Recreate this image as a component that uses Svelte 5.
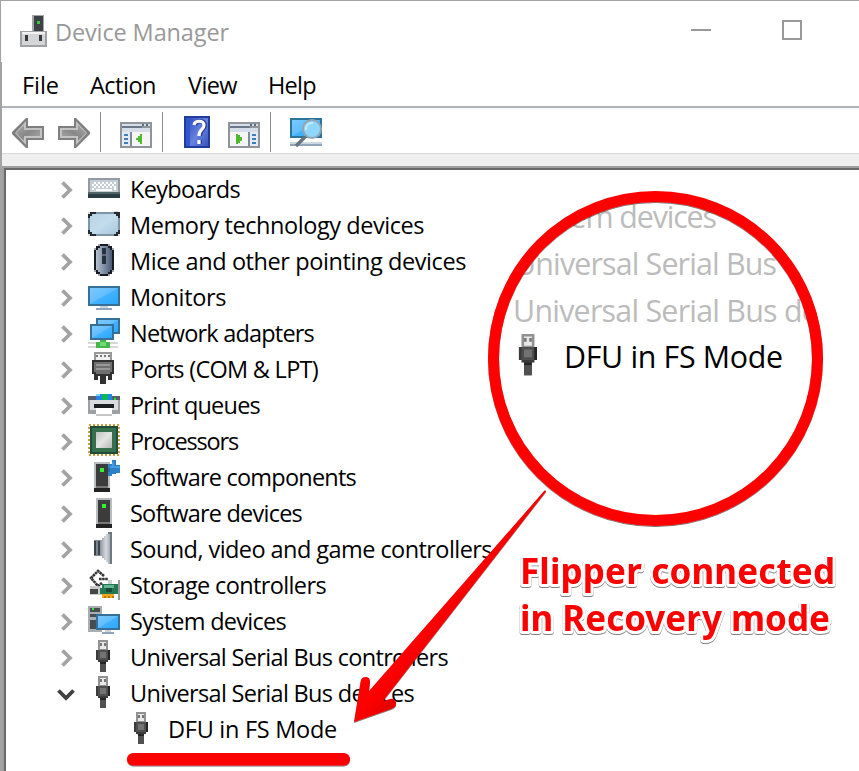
<script>
  const rows = [
    { label: 'Keyboards', icon: 'keyboard', width: 110 },
    { label: 'Memory technology devices', icon: 'memory', width: 294 },
    { label: 'Mice and other pointing devices', icon: 'mouse', width: 336 },
    { label: 'Monitors', icon: 'monitor', width: 96 },
    { label: 'Network adapters', icon: 'network', width: 184 },
    { label: 'Ports (COM & LPT)', icon: 'port', width: 188 },
    { label: 'Print queues', icon: 'printer', width: 130 },
    { label: 'Processors', icon: 'cpu', width: 108 },
    { label: 'Software components', icon: 'component', width: 226 },
    { label: 'Software devices', icon: 'software', width: 172 },
    { label: 'Sound, video and game controllers', icon: 'sound', width: 362 },
    { label: 'Storage controllers', icon: 'storage', width: 196 },
    { label: 'System devices', icon: 'system', width: 156 },
    { label: 'Universal Serial Bus controllers', icon: 'usb', width: 318 },
    { label: 'Universal Serial Bus devices', icon: 'usb', width: 284, open: true },
    { label: 'DFU in FS Mode', icon: 'usb', width: 169, child: true }
  ];

  const menus = [
    { label: 'File', width: 37 },
    { label: 'Action', width: 66 },
    { label: 'View', width: 49 },
    { label: 'Help', width: 48 }
  ];

  const tower = (x, y) =>
    `<path fill="#b9bdc0" d="M${x} ${y}h16v26h-16z"/><path fill="#3c3c3c" d="M${x + 2} ${y + 2}h12v22h-12z"/><path fill="#33f233" d="M${x + 6} ${y + 6}h4v4h-4z"/><path fill="#777" d="M${x + 2} ${y + 24}h12v2h-12z"/><path fill="#222" d="M${x} ${y + 26}h16v4h-16z"/>`;

  const keys = [
    [6, 10], [10, 10], [14, 10], [18, 10], [22, 10], [26, 10],
    [4, 12], [8, 12], [12, 12], [16, 12], [20, 12], [24, 12],
    [6, 14], [10, 14], [14, 14], [18, 14], [22, 14], [26, 14],
    [4, 16], [26, 16]
  ].map(([x, y]) => `<path fill="#fff" d="M${x} ${y}h2v2h-2z"/>`).join('');

  const panel = (inner) =>
    `<path fill="#8f949b" d="M0 6h32v26H0z"/><path fill="#d5dde8" d="M2 8h28v2H2zM2 12h28v4H2z"/><path fill="#6a7788" d="M2 10h20v2H2z"/><path fill="#596a82" d="M22 8h2v2h-2zM26 8h2v2h-2z"/><path fill="#f5f5f5" d="M2 16h28v14H2z"/>${inner}`;

  const icons = {
    keyboard: `<path fill="#929ba5" d="M0 6h32v14H0z"/><path fill="#c5ccd4" d="M2 8h28v12H2z"/>${keys}<path fill="#fff" d="M8 17h16v2H8z"/><path fill="#53646b" d="M0 20h32v2H0z"/><path fill="#2c3d43" d="M0 22h32v4H0z"/>`,
    memory: `<path fill="#7e95a6" d="M0 4h32v24H0z"/><path fill="url(#pale)" d="M4 6h24v2h2v16h-2v2H4v-2H2V8h2z"/><path fill="#262a2e" d="M0 4h8v2H4v2H2v2H0zM26 4h6v6h-2V8h-2V6h-2zM0 22h2v2h2v2h4v2H0zM32 22v6h-6v-2h2v-2h2v-2z"/><path fill="#d7dcdf" d="M0 4h2v2H0zM0 26h2v2H0zM30 26h2v2h-2zM26 3h4v1h-4z"/>`,
    mouse: `<path fill="#aaa" d="M10 0h12v2h2v2h2v24h-2v2h-2v2H10v-2H8v-2H6V4h2V2h2z"/><path fill="#171c24" d="M12 0h8v2h4v4h2v20h-2v4h-4v2h-8v-2H8v-4H6V6h2V2h4z"/><path fill="url(#mouse)" d="M12 2h8v2h2v2h2v20h-2v2h-2v2h-8v-2h-2v-2H8V6h2V4h2z"/><path fill="#28313e" d="M14 4h4v16h-4z"/><path fill="#626b78" d="M14 10h4v2h-4z"/>`,
    monitor: `<path fill="#376f99" d="M0 6h32v20H0z"/><path fill="url(#screen)" d="M2 8h28v16H2z"/><path fill="#cbd5df" d="M12 26h8v2h-8z"/><path fill="#91a6ba" d="M8 28h16v2H8z"/>`,
    network: `<path fill="#376f99" d="M8 2h24v16H8z"/><path fill="url(#screen)" d="M10 4h20v12H10z"/><path fill="#376f99" d="M2 8h24v16H2z"/><path fill="url(#screen)" d="M4 10h20v12H4z"/><path fill="#d7d9d9" d="M0 26h30v6H0z"/><path fill="#fff" d="M0 28h30v2H0z"/><path fill="#45b64c" d="M8 26h4v-2h6v2h4v6H8z"/><path fill="#6fdb75" d="M12 26h6v4h-6z"/>`,
    port: `<path fill="#999" d="M6 0h18v10H6z"/><path fill="#f0f0f0" d="M8 2h14v8H8z"/><path fill="#777" d="M8 3h2v2H8zM12 3h2v2h-2zM16 3h2v2h-2zM20 3h2v2h-2z"/><path fill="#323232" d="M4 8h22v14h-2v6h-4v-4h-2v8h-6v-8h-2v4H6v-6H4z"/><path fill="#6f6f6f" d="M6 10h18v10h-2v2H8v-2H6z"/><path fill="#999" d="M8 12h14v2H8zM8 16h14v2H8z"/>`,
    printer: `<path fill="#566068" d="M0 8h8v6H0zM24 8h8v6h-8z"/><path fill="#2584e7" d="M8 6h16v8H8z"/><path fill="#8ccdff" d="M8 6h4v2H8z"/><path fill="#08b957" d="M14 6h6v6h-6z"/><path fill="#9aa0a5" d="M0 12h32v14H0z"/><path fill="#d9dcde" d="M2 12h28v10H2z"/><path fill="#20e52d" d="M26 10h2v2h-2z"/><path fill="#1b1f22" d="M6 16h20v4H6z"/><path fill="#fff" d="M8 20h16v8H8z"/><path fill="#c5c5c5" d="M8 26h16v2H8z"/>`,
    cpu: `<rect x="1" y="1" width="30" height="30" fill="none" stroke="#c99c48" stroke-width="2" stroke-dasharray="2 2"/><path fill="#224c37" d="M2 2h28v28H2z"/><path fill="#37704f" d="M4 4h24v24H4z"/><path fill="#285b41" d="M8 8h16v16H8z"/><path fill="url(#metal)" d="M8 8h16v16H8z"/>`,
    component: tower(6, 2) + `<path fill="#2d7fc6" d="M24 0h4v4h4v12h-4v-2h-4v2h-4V4h4z"/><path fill="#fff" d="M28 2h4v3h-4zM28 13h4v3h-4z"/><path fill="#2268ac" d="M20 8h2v4h-2z"/><path fill="#439de2" d="M24 2h2v4h6v2H22V6h2z"/>`,
    software: tower(8, 2),
    sound: `<path fill="#7d8790" d="M6 8h6v16H6z"/><path fill="#3b444c" d="M6 9h2v14H6zM10 9h2v14h-2z"/><path fill="url(#cone)" d="M12 8h2V6h2V4h2V2h2V0h4v32h-4v-2h-2v-2h-2v-2h-2v-2h-2z"/><path fill="#6d7880" d="M20 0h4v32h-2V2h-2z"/>`,
    storage: `<path fill="none" stroke="#353535" stroke-width="2.6" stroke-dasharray="2.6 .5" d="M16 8 10 3 3 10l7 8 4-3M11 11h9"/><path fill="#c7c9ca" d="M2 18h8l6 3v6H2z"/><path fill="#454545" d="M2 21h8v5H2z"/><path fill="#c8d1d2" d="M20 12h4v4h-4z"/><path fill="#267653" d="M14 16h16v10H12v-6h2z"/><path fill="#64b693" d="M16 17h10v3H16z"/><path fill="#174a39" d="M18 20h6v4h-6z"/><path fill="#efa81d" d="M14 26h12v4H14z"/><path fill="#b57613" d="M16 28h2v2h-2zM20 28h2v2h-2zM24 28h2v2h-2z"/><path fill="#969b9d" d="M30 12h2v20h-2z"/>`,
    system: `<path fill="#a8aeb2" d="M0 2h14v26H0z"/><path fill="#484d50" d="M2 4h10v4H2zM2 10h10v3H2zM2 16h7v9H2z"/><path fill="#3de544" d="M4 4h2v2H4z"/><path fill="#376f99" d="M8 10h24v16H8z"/><path fill="url(#screen)" d="M10 12h20v12H10z"/><path fill="#cbd5df" d="M17 26h6v2h-6z"/><path fill="#91a6ba" d="M14 28h12v2H14z"/>`,
    usb: `<path fill="#929292" d="M10 0h10v10H10z"/><path fill="#e8e8e8" d="M12 2h6v7h-6z"/><path fill="#777" d="M12 3h2v3h-2zM16 3h2v3h-2z"/><path fill="#3b3b3b" d="M8 10h14v10h-2v2h-2v10h-6V22h-2v-2H8z"/><path fill="#4f4f4f" d="M10 10h10v10H10z"/><path fill="#737373" d="M12 12h6v6h-6z"/><path fill="#242424" d="M20 10h2v10h-2zM12 22h6v2h-6z"/><path fill="#505050" d="M12 24h6v8h-6z"/>`,
    back: `<path fill="#7f7f7f" d="M14 2h2v8h16v14H16v8h-2l-2-2-2-2-2-2-2-2-2-2-2-2-2-2v-2l2-2 2-2 2-2 2-2 2-2 2-2z"/><path fill="#c3c3c3" d="M14 5v7h16v10H14v7L3 17z"/><path fill="url(#arrow)" d="M12 9v5h16v6H12v5l-8-8z"/>`,
    forward: `<g transform="matrix(-1 0 0 1 32 0)"><path fill="#7f7f7f" d="M14 2h2v8h16v14H16v8h-2l-2-2-2-2-2-2-2-2-2-2-2-2-2-2v-2l2-2 2-2 2-2 2-2 2-2 2-2z"/><path fill="#c3c3c3" d="M14 5v7h16v10H14v7L3 17z"/><path fill="url(#arrow)" d="M12 9v5h16v6H12v5l-8-8z"/></g>`,
    left: panel(`<path fill="#e4eaf1" d="M2 16h8v14H2z"/><path fill="#3c7fbd" d="M4 18h4v2H4zM4 22h4v2H4zM4 26h4v2H4z"/><path fill="#7d8a9b" d="M10 16h2v14h-2z"/><path fill="#4fba2d" d="M22 18v10h-2v-2h-2v-2h-2v-2h2v-2h2v-2z"/>`),
    right: panel(`<path fill="#e4eaf1" d="M22 16h8v14h-8z"/><path fill="#3c7fbd" d="M24 18h4v2h-4zM24 22h4v2h-4zM24 26h4v2h-4z"/><path fill="#7d8a9b" d="M20 16h2v14h-2z"/><path fill="#4fba2d" d="M8 18v10h2v-1h2v-2h2v-4h-2v-2h-2v-1z"/>`),
    help: `<path fill="#233b9c" d="M2 0h26v32H2z"/><path fill="url(#book)" d="M8 2h18v28H8z"/><path fill="#3157cf" d="M4 2h4v28H4z"/><path fill="none" stroke="#263c8c" stroke-width="4" d="M13 9c1-5 10-5 10 0 0 5-5 4-5 11m0 4v4"/><path fill="none" stroke="#fff" stroke-width="3.2" d="M12 9c1-5 10-5 10 0 0 5-5 4-5 11m0 4v4"/>`,
    scan: `<path fill="#2c7499" d="M0 2h32v20H0z"/><path fill="url(#screen)" d="M2 4h28v16H2z"/><path fill="#ccd7df" d="M0 26h32v2H0z"/><path fill="#91a6ba" d="M0 28h32v2H0z"/><path fill="none" stroke="#65747d" stroke-width="3.400" d="m15 21-9 9"/><circle cx="22" cy="13" r="9" fill="#8fd6fc" stroke="#91a5b1" stroke-width="2"/><path fill="none" stroke="#c3eaff" stroke-width="2" d="M16 14a6 6 0 0 1 7-7"/>`,
    app: `<path fill="#a3a7aa" d="M12 0h12v16H12z"/><path fill="#3c4144" d="M14 1h9v16h-9z"/><path fill="#35c847" d="M17 6h3v3h-3z"/><path fill="#9fa2a5" d="M0 16h27v16H0z"/><path fill="#d3d5d7" d="M2 17h23v13H2z"/><path fill="#f2f2f2" d="M2 17h23v2H2z"/><path fill="#343b40" d="M5 20h3v6H5zM19 20h3v6h-3z"/>`
  };

  // Spreads a label over its measured width with even tracking.
  function fit(node, width) {
    const natural = node.getBoundingClientRect().width;
    node.style.letterSpacing = `${(width - natural) / node.textContent.length}px`;
  }
</script>

{#snippet icon(name)}
  <svg class="icon" viewBox="0 0 32 32" aria-hidden="true">{@html icons[name]}</svg>
{/snippet}

<svg class="defs" aria-hidden="true">
  <defs>
    <linearGradient id="screen" x2="1" y2="1"><stop offset="0" stop-color="#7bc9ff" /><stop offset=".48" stop-color="#63beff" /><stop offset=".52" stop-color="#43b2ff" /><stop offset="1" stop-color="#29a7fb" /></linearGradient>
    <linearGradient id="pale" x2="1" y2="1"><stop offset="0" stop-color="#bad4e5" /><stop offset=".5" stop-color="#c3dcec" /><stop offset="1" stop-color="#a9c7dc" /></linearGradient>
    <linearGradient id="mouse" x2="1"><stop offset="0" stop-color="#b6c0ce" /><stop offset=".5" stop-color="#8090a7" /><stop offset="1" stop-color="#4a5a73" /></linearGradient>
    <linearGradient id="metal" x2="1" y2="1"><stop offset="0" stop-color="#bfc2c2" /><stop offset=".5" stop-color="#e5e5e5" /><stop offset="1" stop-color="#b5b7b7" /></linearGradient>
    <linearGradient id="cone" x2="1"><stop offset="0" stop-color="#8c959d" /><stop offset=".5" stop-color="#d6dade" /><stop offset="1" stop-color="#8c959d" /></linearGradient>
    <linearGradient id="arrow" x2="1" y2="1"><stop offset="0" stop-color="#aaa" /><stop offset=".5" stop-color="#888" /><stop offset="1" stop-color="#aaa" /></linearGradient>
    <linearGradient id="book" x2="1" y2="1"><stop offset="0" stop-color="#3552c5" /><stop offset=".5" stop-color="#6683df" /><stop offset="1" stop-color="#3854bd" /></linearGradient>
  </defs>
</svg>

<main class="window">
  <header class="titlebar">
    {@render icon('app')}
    <h1><span use:fit={174}>Device Manager</span></h1>
    <div class="controls"><i class="min"></i><i class="max"></i></div>
  </header>

  <div class="body">
    <nav class="menu">
      {#each menus as m}<span class="item"><span use:fit={m.width}>{m.label}</span></span>{/each}
    </nav>
    <div class="toolbar">
      {@render icon('back')}
      <span class="gap"></span>
      {@render icon('forward')}
      <i class="sep"></i>
      {@render icon('left')}
      <i class="sep"></i>
      {@render icon('help')}
      <span class="gap"></span>
      {@render icon('right')}
      <i class="sep"></i>
      {@render icon('scan')}
    </div>
    <div class="strip"></div>
    <ul class="tree">
      {#each rows as r}
        <li class:child={r.child}>
          <svg class="chevron" viewBox="0 0 18 36" aria-hidden="true">
            {#if r.open}
              <path d="M.5 14.500 8 22l7.500-7.500" stroke="#404040" />
            {:else if !r.child}
              <path d="m4.500 10.500 7.500 7.500-7.500 7.500" stroke="#a3a3a3" />
            {/if}
          </svg>
          {@render icon(r.icon)}
          <span class="label" use:fit={r.width}>{r.label}</span>
        </li>
      {/each}
    </ul>
  </div>

  <svg class="notes" viewBox="0 0 859 771">
    <defs>
      <clipPath id="lens"><circle cx="655.5" cy="358.500" r="160" /></clipPath>
      <linearGradient id="shaft" gradientUnits="userSpaceOnUse" x1="405" y1="648" x2="424" y2="663"><stop offset="0" stop-color="#ff0000" /><stop offset=".4" stop-color="#fa0202" /><stop offset="1" stop-color="#e60000" /></linearGradient>
      <filter id="edge" x="-5%" y="-5%" width="110%" height="112%"><feDropShadow dx="0" dy="1" stdDeviation=".5" flood-color="#000" flood-opacity=".55" /></filter>
    </defs>
    <g clip-path="url(#lens)">
      <circle cx="655.5" cy="358.500" r="160" fill="#fff" />
      <g class="faded">
        <text x="517" y="228" textLength="200">System devices</text>
        <text x="514" y="274.500" textLength="413">Universal Serial Bus controllers</text>
        <text x="513" y="321.500" textLength="371">Universal Serial Bus devices</text>
      </g>
      <text x="564" y="368" textLength="219">DFU in FS Mode</text>
      <svg x="508.500" y="334" width="41.500" height="41.500" viewBox="0 0 32 32">{@html icons.usb}</svg>
    </g>
    <g filter="url(#edge)">
      <circle cx="655.5" cy="358.500" r="162" fill="none" stroke="#f00" stroke-width="11" />
    </g>
    <path filter="url(#edge)" fill="url(#shaft)" d="M544.500 490.500 Q546 490 546 491.500L383 701l7-2q5-1 6 3.500t-5 6.500L354 722l6.500-40q.7-5 5.200-5t4.300 5L369 691z" />
    <rect filter="url(#edge)" x="127" y="753" width="223" height="12.500" rx="6.200" fill="#f00" />
    <g class="caption">
      <text x="520" y="583.500" textLength="315">Flipper connected</text>
      <text x="520" y="630.500" textLength="310">in Recovery mode</text>
    </g>
  </svg>
</main>

<style>
  :global(body) { margin: 0; overflow: hidden; }
  .defs { position: absolute; width: 0; height: 0; }
  .window {
    position: relative;
    box-sizing: border-box;
    width: 859px;
    height: 771px;
    overflow: hidden;
    background: #fff;
    border-top: 1px solid #a3a3a3;
    font: 23.5px/34px "Open Sans", "Noto Sans", sans-serif;
    color: #000;
    white-space: nowrap;
  }
  .icon { display: block; flex: none; width: 32px; height: 32px; overflow: visible; }
  .titlebar {
    display: flex;
    align-items: flex-start;
    box-sizing: border-box;
    height: 61px;
    padding: 14px 57px 0 19px;
    border-left: 1px solid #a3a3a3;
  }
  h1 { margin: 0 0 0 3px; font: inherit; color: #999; }
  .controls { display: flex; align-items: center; gap: 71px; margin: 5px 0 0 auto; height: 20px; }
  .min { width: 20px; height: 2px; background: #999; }
  .max { box-sizing: border-box; width: 20px; height: 20px; border: 2px solid #999; }
  .body { border-left: 2px solid #a3a3a3; }
  .menu { display: flex; box-sizing: border-box; height: 46px; padding: 6px 0 0 20px; border-bottom: 2px solid #b2b2b2; }
  .item:nth-child(1) { width: 68px; }
  .item:nth-child(2) { width: 98px; }
  .item:nth-child(3) { width: 80px; }
  .toolbar {
    display: flex;
    box-sizing: border-box;
    height: 46px;
    padding: 8px 0 0 10px;
    border-bottom: 1px solid #d9d9d9;
    box-shadow: inset 0 2px #f5f9fd;
  }
  .gap { width: 14px; }
  .sep { flex: none; width: 1px; height: 40px; margin: -4px 19px 0 10px; background: #8b8b8b; }
  .strip { height: 12px; background: #efefef; }
  .tree {
    list-style: none;
    padding: 2px 0 0 52px;
    height: 600px;
    border: solid #696969;
    border-width: 2px 0 0 2px;
    box-shadow: 0 0 0 2px #a0a0a0;
    margin: 2px 0 0 2px;
  }
  li { display: flex; height: 36px; }
  .chevron { flex: none; width: 18px; height: 36px; margin-right: 12px; fill: none; stroke-width: 3.8; overflow: visible; }
  .label { margin-left: 10px; }
  .child { padding-left: 38px; }
  .notes { position: absolute; left: 0; top: -1px; width: 859px; height: 771px; }
  .notes text { font: 30.4px "Open Sans", "Noto Sans", sans-serif; }
  .faded { fill: #bcbcbc; }
  .caption { filter: drop-shadow(0 1px .5px rgba(0, 0, 0, .5)); }
  .caption text {
    font: bold 35px "Noto Sans", "Open Sans", sans-serif;
    fill: #f00;
    stroke: #fff;
    stroke-width: 6px;
    stroke-linejoin: round;
    paint-order: stroke;
  }
</style>
